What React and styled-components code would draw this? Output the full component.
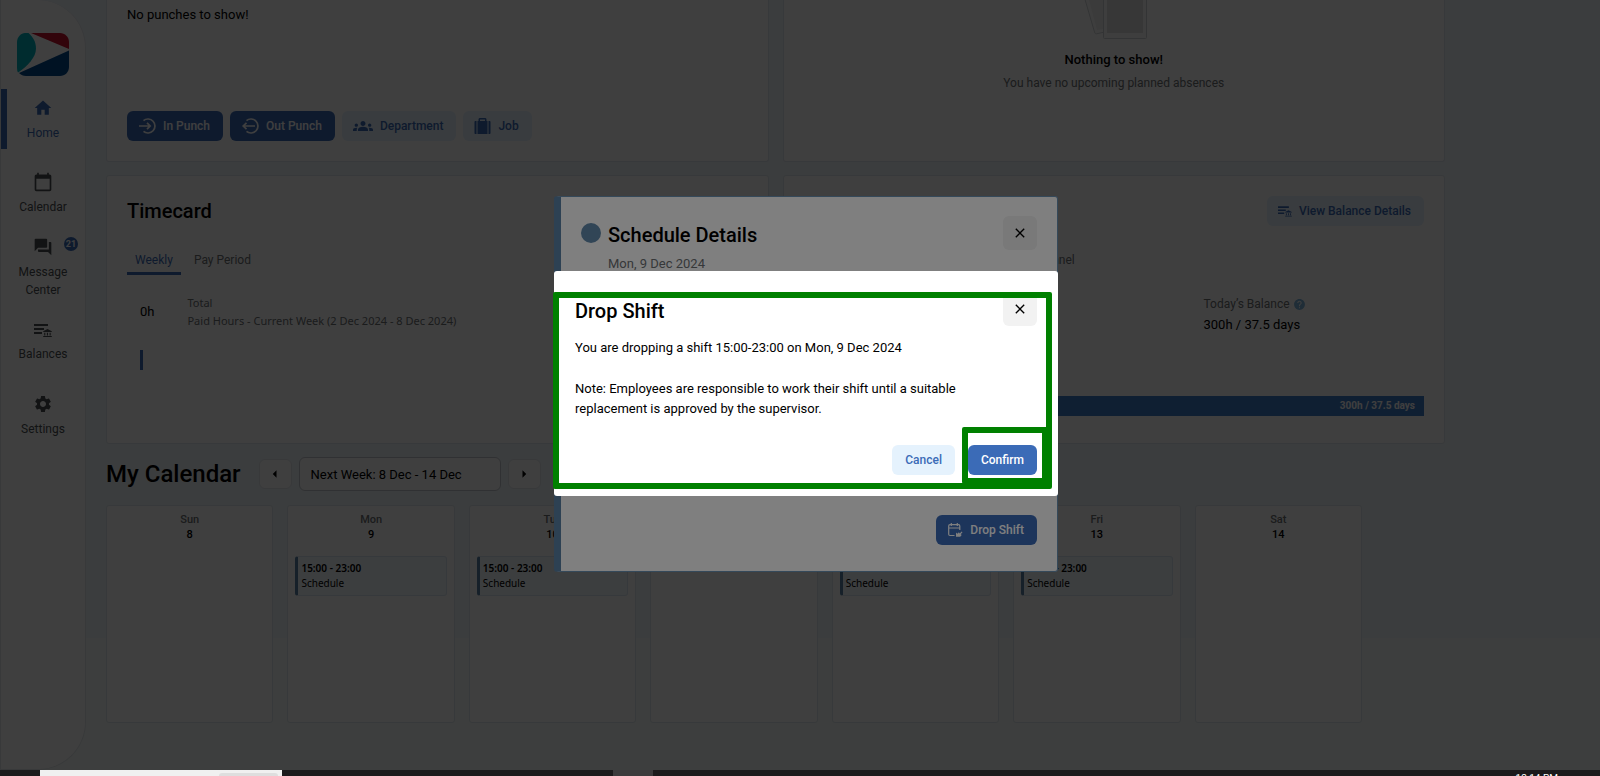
import React from "react";
import styled, { createGlobalStyle, css } from "styled-components";
import {
  MdHome,
  MdCalendarToday,
  MdQuestionAnswer,
  MdSettings,
  MdGroups,
  MdHelp,
  MdClose,
  MdArrowLeft,
  MdArrowRight,
} from "react-icons/md";

const Logo = () => (
  <svg width="52" height="43" viewBox="0 0 52 43" aria-hidden="true">
    <path d="M8 0h3.500C16 4 19 9 19 15.500C19 24 11 33 1 39.500Q0 38 0 35V9C0 4 4 0 8 0z" fill="#00b2bf" />
    <path d="M14 0h29c5 0 9 4 9 9v7z" fill="#c8102e" />
    <path d="M52 17.500V34c0 5-4 9-9 9H9c-3 0-5-1-7-3z" fill="#00498f" />
  </svg>
);

const BalanceIcon = ({ size }) => (
  <svg width={size} height={size} viewBox="1 1 18 18" fill="currentColor" aria-hidden="true">
    <path d="M1 4h14v2H1zM1 8h10v2H1zM1 12h8v2H1z" />
    <path d="M14.500 9l4.300 2.200v.8h-8.600v-.8zM11.200 12.800h1.100v2.600h-1.100zM13.900 12.800H15v2.600h-1.100zM16.600 12.800h1.100v2.600h-1.100zM10.200 16h8.600v1h-8.600z" />
  </svg>
);

const PunchIcon = ({ out }) => (
  <svg width="18" height="18" viewBox="0 0 18 18" fill="none" stroke="currentColor" strokeWidth="1.700" aria-hidden="true">
    <path d="M5.500 3.600A7 7 0 1 1 5.500 14.400" />
    {out ? <path d="M14 9H2.500M5.500 5.800L2.200 9l3.300 3.200" /> : <path d="M1 9h11M9 5.800L12.200 9 9 12.200" />}
  </svg>
);

const LuggageIcon = () => (
  <svg width="17" height="18" viewBox="1 0 16 18" fill="currentColor" aria-hidden="true">
    <path d="M5 4V2.500C5 1.500 5.700 1 6.500 1h5c.8 0 1.500.5 1.500 1.500V4h1v13H4V4zM6.500 4h5V2.500h-5z" />
    <path d="M3 4v13H2c-.6 0-1-.4-1-1V5c0-.6.4-1 1-1zM15 4v13h1c.6 0 1-.4 1-1V5c0-.6-.4-1-1-1z" />
  </svg>
);

const DropShiftIcon = () => (
  <svg width="16" height="16" viewBox="0 0 16 16" fill="none" stroke="currentColor" strokeWidth="1.200" aria-hidden="true">
    <path d="M7.500 13.500H3c-.8 0-1.300-.5-1.300-1.200V4c0-.8.5-1.300 1.300-1.300h8.500c.8 0 1.300.5 1.300 1.300v4M1.700 6h11M4.300 1v3M10.300 1v3" />
    <path d="M9 14.800v-4.300l1.400 1.200 1.500-1.500.8 1.200 2-2 .8.800-1.800 2 1 .9-1.500 1.700z" fill="currentColor" stroke="none" />
  </svg>
);

const EmptyArt = () => (
  <svg width="84" height="39" viewBox="8 0 84 39" aria-hidden="true">
    <path d="M20-4l10.500 36c.5 1.500 1 2 2 1.800l14-3V-4z" fill="#fafafa" stroke="#cfd3d6" />
    <path d="M24-4l9 34 12-2V-4z" fill="#ededed" />
    <rect x="39.500" y="-10" width="43" height="48.500" rx="1" fill="#fafafa" stroke="#cfd3d6" />
    <rect x="43" y="-10" width="36" height="43" fill="#dedede" />
  </svg>
);

const navItems = [
  { label: "Home", icon: <MdHome size={20} />, active: true },
  { label: "Calendar", icon: <MdCalendarToday size={20} /> },
  { label: "Message Center", icon: <MdQuestionAnswer size={20} />, count: 21 },
  { label: "Balances", icon: <BalanceIcon size={18} /> },
  { label: "Settings", icon: <MdSettings size={20} /> },
];

const days = [
  { name: "Sun", date: 8 },
  { name: "Mon", date: 9, shift: "15:00 - 23:00" },
  { name: "Tue", date: 10, shift: "15:00 - 23:00" },
  { name: "Wed", date: 11 },
  { name: "Thu", date: 12, shift: "15:00 - 23:00" },
  { name: "Fri", date: 13, shift: "15:00 - 23:00" },
  { name: "Sat", date: 14 },
];

const App = () => {
  return (
    <>
      <GlobalStyle />
      <Screen>
        <Page>
          <Sidebar>
            <Logo />
            <Nav>
              {navItems.map((item) => (
                <NavLink key={item.label} href="#" $active={item.active}>
                  {item.icon}
                  <span>{item.label}</span>
                  {item.count && <Badge>{item.count}</Badge>}
                </NavLink>
              ))}
            </Nav>
          </Sidebar>

          <Main>
            <CardRow>
              <PunchCard>
                <Text>No punches to show!</Text>
                <ButtonRow>
                  <Button $primary><PunchIcon />In Punch</Button>
                  <Button $primary><PunchIcon out />Out Punch</Button>
                  <Button><MdGroups size={20} />Department</Button>
                  <Button><LuggageIcon />Job</Button>
                </ButtonRow>
              </PunchCard>
              <EmptyCard>
                <EmptyArt />
                <EmptyTitle>Nothing to show!</EmptyTitle>
                <Muted>You have no upcoming planned absences</Muted>
              </EmptyCard>
            </CardRow>

            <CardRow>
              <Card>
                <CardHead>
                  <Title>Timecard</Title>
                </CardHead>
                <TabList>
                  <Tab $active>Weekly</Tab>
                  <Tab>Pay Period</Tab>
                </TabList>
                <Hours>
                  <Text>0h</Text>
                  <HoursInfo>
                    <div>Total</div>
                    <div>Paid Hours - Current Week (2 Dec 2024 - 8 Dec 2024)</div>
                  </HoursInfo>
                </Hours>
                <HoursBar />
              </Card>
              <Card>
                <CardHead $end>
                  <Button><BalanceIcon size={14} />View Balance Details</Button>
                </CardHead>
                <TabList $end>
                  <Tab>Personnel</Tab>
                </TabList>
                <Balance>
                  <BalanceLabel>Today’s Balance <MdHelp size={13} /></BalanceLabel>
                  <Text>300h / 37.5 days</Text>
                </Balance>
                <BalanceBar>300h / 37.5 days</BalanceBar>
              </Card>
            </CardRow>

            <CalendarHead>
              <PageTitle>My Calendar</PageTitle>
              <ArrowButton aria-label="Previous week"><MdArrowLeft size={18} /></ArrowButton>
              <WeekSelect aria-label="Week">
                <option>Next Week: 8 Dec - 14 Dec</option>
              </WeekSelect>
              <ArrowButton aria-label="Next week"><MdArrowRight size={18} /></ArrowButton>
            </CalendarHead>
            <Week>
              {days.map((day) => (
                <Day key={day.name}>
                  <DayName>{day.name}</DayName>
                  <DayDate>{day.date}</DayDate>
                  {day.shift && (
                    <Shift>
                      <strong>{day.shift}</strong>
                      <span>Schedule</span>
                    </Shift>
                  )}
                </Day>
              ))}
            </Week>
          </Main>

          <Backdrop />
          <ScheduleDialog role="dialog" aria-label="Schedule Details">
            <DialogHead>
              <Dot />
              <div>
                <DialogTitle>Schedule Details</DialogTitle>
                <DialogDate>Mon, 9 Dec 2024</DialogDate>
              </div>
              <CloseButton aria-label="Close details"><MdClose size={16} /></CloseButton>
            </DialogHead>
            <DialogFoot>
              <Button $primary><DropShiftIcon />Drop Shift</Button>
            </DialogFoot>
          </ScheduleDialog>

          <Backdrop />
          <DropDialog role="dialog" aria-label="Drop Shift">
            <DialogHead>
              <DialogTitle>Drop Shift</DialogTitle>
              <CloseButton aria-label="Close"><MdClose size={16} /></CloseButton>
            </DialogHead>
            <Message>You are dropping a shift 15:00-23:00 on Mon, 9 Dec 2024</Message>
            <Message>
              Note: Employees are responsible to work their shift until a suitable replacement is
              approved by the supervisor.
            </Message>
            <DialogFoot>
              <Button $plain>Cancel</Button>
              <Button $primary $plain>Confirm</Button>
            </DialogFoot>
            <DialogMark />
            <ConfirmMark />
          </DropDialog>
        </Page>
        <Taskbar>
          <TaskSearch><span /></TaskSearch>
          <TaskApp />
          <Clock>12:14 PM</Clock>
        </Taskbar>
      </Screen>
    </>
  );
};

const GlobalStyle = createGlobalStyle`
  * {
    box-sizing: border-box;
  }

  body {
    margin: 0;
    font-family: Roboto, sans-serif;
    font-size: 13px;
    line-height: 20px;
    color: #000;
  }

  h1, h2, h3, p {
    margin: 0;
  }

  button, select {
    font-family: inherit;
    cursor: pointer;
  }
`;

const Screen = styled.div`
  display: flex;
  flex-direction: column;
  height: 100vh;
  overflow: hidden;
`;

const Page = styled.div`
  position: relative;
  flex: 1;
  min-height: 0;
  display: flex;
  overflow: hidden;
  background: linear-gradient(#eff4fa 638px, #f5fbf8 638px);
`;

const Sidebar = styled.aside`
  display: flex;
  flex-direction: column;
  align-items: center;
  flex: none;
  width: 86px;
  padding-top: 33px;
  background: #fff;
  border: 1px solid #e2e6ea;
  border-top: 0;
  border-radius: 0 48px 48px 0;
`;

const Nav = styled.nav`
  display: flex;
  flex-direction: column;
  align-self: stretch;
  gap: 14px;
  margin-top: 13px;
`;

const NavLink = styled.a`
  position: relative;
  display: flex;
  flex-direction: column;
  align-items: center;
  justify-content: center;
  gap: 6px;
  height: 60px;
  padding: 2px 12px 0;
  font-size: 12px;
  line-height: 18px;
  text-align: center;
  text-decoration: none;
  color: ${({ $active }) => ($active ? "#3b6bb7" : "#4b4f52")};
  box-shadow: ${({ $active }) => ($active ? "inset 6px 0 #3b6bb7" : "none")};

  svg {
    flex: none;
  }
`;

const Badge = styled.b`
  position: absolute;
  top: 0;
  right: 7px;
  width: 14px;
  height: 14px;
  border-radius: 50%;
  background: #3b6bb7;
  color: #fff;
  font-size: 9px;
  line-height: 14px;
`;

const Main = styled.main`
  flex: 1;
  min-width: 0;
  padding: 0 20px;
`;

const CardRow = styled.div`
  display: grid;
  grid-template-columns: 1fr 1fr;
  gap: 14px;
  max-width: 1339px;
  margin-bottom: 13px;
`;

const Card = styled.section`
  min-height: 269px;
  padding: 20px;
  background: #fff;
  border: 1px solid #dde5ec;
  border-radius: 3px;
`;

const PunchCard = styled(Card)`
  display: flex;
  flex-direction: column;
  justify-content: space-between;
  min-height: 162px;
  padding-top: 5px;
  border-top: 0;
  border-radius: 0 0 3px 3px;
`;

const EmptyCard = styled(PunchCard)`
  align-items: center;
  justify-content: flex-start;
  padding-top: 0;
`;

const Text = styled.p`
  color: #000;
`;

const EmptyTitle = styled.h3`
  margin-top: 11px;
  font-size: 13px;
  font-weight: 500;
`;

const Muted = styled.p`
  margin-top: 3px;
  font-size: 12px;
  color: #6c7073;
`;

const ButtonRow = styled.div`
  display: flex;
  gap: 7px;
`;

const Button = styled.button`
  display: inline-flex;
  align-items: center;
  gap: 7px;
  height: 30px;
  padding: 0 13px 0 11px;
  border: 0;
  border-radius: 6px;
  font-size: 12px;
  font-weight: 500;
  color: #3b6bb7;
  background: #e5f2fd;

  ${({ $primary }) => $primary && css`
    color: #fff;
    background: #3b6bb7;
  `}

  ${({ $plain }) => $plain && css`
    padding: 0 13px;
  `}
`;

const CardHead = styled.div`
  display: flex;
  align-items: center;
  justify-content: ${({ $end }) => ($end ? "flex-end" : "flex-start")};
  height: 30px;
`;

const Title = styled.h2`
  font-size: 20px;
  font-weight: 500;
  line-height: 30px;
`;

const TabList = styled.div`
  display: flex;
  justify-content: ${({ $end }) => ($end ? "flex-end" : "flex-start")};
  gap: 5px;
  width: ${({ $end }) => ($end ? "45%" : "auto")};
  margin-top: 22px;
`;

const Tab = styled.button`
  height: 27px;
  padding: 0 8px;
  border: 0;
  border-bottom: 3px solid ${({ $active }) => ($active ? "#3b6bb7" : "transparent")};
  background: none;
  font-size: 12px;
  color: ${({ $active }) => ($active ? "#3b6bb7" : "#6c7073")};
`;

const Hours = styled.div`
  display: flex;
  align-items: center;
  gap: 33px;
  padding: 19px 13px 0;
`;

const HoursInfo = styled.div`
  font-family: "Noto Sans", sans-serif;
  font-size: 11px;
  line-height: 18px;
  color: #6c7073;
`;

const HoursBar = styled.div`
  width: 3px;
  height: 20px;
  margin: 20px 13px 0;
  background: #3b6bb7;
`;

const Balance = styled.div`
  margin: 18px 0 0 400px;
`;

const BalanceLabel = styled.div`
  display: flex;
  align-items: center;
  gap: 3px;
  font-size: 12px;
  line-height: 22px;
  color: #6c7073;

  svg {
    color: #7db4dc;
  }
`;

const BalanceBar = styled.div`
  height: 20px;
  margin-top: 61px;
  padding-right: 9px;
  background: #3f7cc8;
  color: #fff;
  font-size: 10px;
  font-weight: 700;
  text-align: right;
`;

const CalendarHead = styled.div`
  display: flex;
  align-items: center;
  gap: 7px;
  margin-bottom: 14px;
`;

const PageTitle = styled.h1`
  margin-right: 11px;
  font-size: 24px;
  font-weight: 500;
  line-height: 34px;
`;

const ArrowButton = styled.button`
  display: flex;
  align-items: center;
  justify-content: center;
  width: 33px;
  height: 30px;
  padding: 0;
  border: 1px solid #e2e6ea;
  border-radius: 6px;
  background: #fff;
  color: #000;
`;

const WeekSelect = styled.select`
  appearance: none;
  width: 202px;
  height: 34px;
  padding: 0 11px;
  border: 1px solid #c2c7cc;
  border-radius: 6px;
  background: #fff;
  color: #000;
  font-size: 13px;
`;

const Week = styled.div`
  display: grid;
  grid-template-columns: repeat(7, 1fr);
  gap: 14px;
  max-width: 1256px;
`;

const Day = styled.div`
  min-height: 218px;
  padding: 6px 7px;
  background: #fff;
  border: 1px solid #dde5ec;
  border-radius: 3px;
  font-size: 11px;
  font-weight: 500;
  line-height: 15px;
  text-align: center;
`;

const DayName = styled.div`
  color: #6c7073;
`;

const DayDate = styled.div`
  color: #000;
`;

const Shift = styled.div`
  display: flex;
  flex-direction: column;
  margin-top: 14px;
  padding: 4px 3px;
  border: 1px solid #dbe6f0;
  border-left: 3px solid #5a82a6;
  border-radius: 3px;
  background: #f2f8fd;
  font-family: "Noto Sans", sans-serif;
  font-size: 10px;
  font-weight: 400;
  text-align: left;

  strong {
    font-weight: 600;
  }
`;

const Backdrop = styled.div`
  position: absolute;
  inset: 0;
  background: rgba(0, 0, 0, 0.5);
`;

const Dialog = styled.div`
  position: absolute;
  left: calc(50% + 6px);
  width: 504px;
  transform: translateX(-50%);
  display: flex;
  flex-direction: column;
  background: #fff;
  border-radius: 3px;
`;

const ScheduleDialog = styled(Dialog)`
  top: 196px;
  min-height: 376px;
  justify-content: space-between;
  padding: 19px 20px 26px;
  border: 1px solid #6b93b5;
  border-left: 7px solid #5a82a6;
`;

const DropDialog = styled(Dialog)`
  top: 271px;
  padding: 21px;
`;

const DialogHead = styled.div`
  display: flex;
  align-items: flex-start;
`;

const Dot = styled.span`
  width: 20px;
  height: 20px;
  margin: 7px 7px 0 0;
  border-radius: 50%;
  background: #628aac;
`;

const DialogTitle = styled(Title)`
  margin-top: 4px;
`;

const DialogDate = styled.p`
  margin-top: 4px;
  color: #6c7073;
`;

const CloseButton = styled.button`
  display: flex;
  align-items: center;
  justify-content: center;
  width: 34px;
  height: 34px;
  margin-left: auto;
  padding: 0;
  border: 0;
  border-radius: 6px;
  background: #f2f2f2;
  color: #000;
`;

const Message = styled.p`
  max-width: 420px;
  margin: 12px 0 9px;
`;

const DialogFoot = styled.div`
  display: flex;
  justify-content: flex-end;
  gap: 13px;
  margin-top: 17px;
`;

// green highlight frames drawn over the dialog
const DialogMark = styled.div`
  position: absolute;
  inset: 21px 6px 7px -1px;
  border: 6px solid #008000;
  border-radius: 2px;
  pointer-events: none;
`;

const ConfirmMark = styled(DialogMark)`
  inset: auto 10px 12px auto;
  width: 86px;
  height: 57px;
`;

const Taskbar = styled.footer`
  display: flex;
  flex: none;
  height: 6px;
  padding: 0 42px 0 40px;
  overflow: hidden;
  background: #1c1a1c;
`;

const TaskSearch = styled.div`
  display: flex;
  justify-content: flex-end;
  width: 242px;
  padding: 3px 4px 0;
  background: #f0f0f0;

  span {
    width: 59px;
    border-radius: 4px 4px 0 0;
    background: #dedede;
  }
`;

const TaskApp = styled.div`
  width: 40px;
  margin-left: 331px;
  background: #3c3a3c;
`;

const Clock = styled.time`
  margin-left: auto;
  padding-top: 3px;
  color: #fff;
  font-size: 10px;
  line-height: 12px;
`;

export default App;
